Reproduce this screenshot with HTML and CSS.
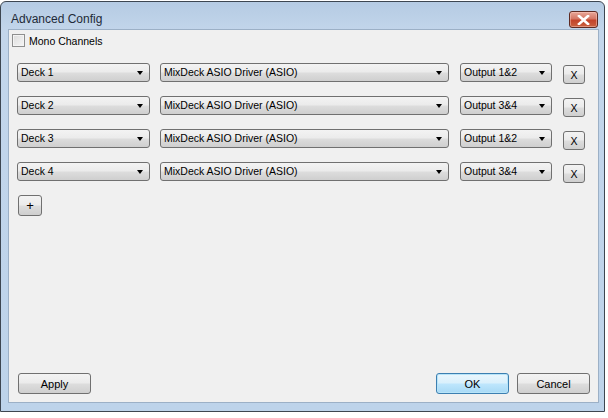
FILE: index.html
```html
<!DOCTYPE html>
<html>
<head>
<meta charset="utf-8">
<link rel="stylesheet" href="styles.css">
</head>
<body>
<div class="window">
  <div class="titlebar">
    <span class="title">Advanced Config</span>
    <div class="close"><svg width="13" height="10" viewBox="0 0 13 10"><path d="M2 1 L11 9 M11 1 L2 9" stroke="#fff" stroke-width="2.6" stroke-linecap="square"/></svg></div>
  </div>
  <div class="client">
    <label class="check"><span class="box"></span><span>Mono Channels</span></label>
    <div class="rows">
      <div class="row">
        <div class="combo deck">Deck 1<span class="arrow"></span></div>
        <div class="combo driver">MixDeck ASIO Driver (ASIO)<span class="arrow"></span></div>
        <div class="combo output">Output 1&amp;2<span class="arrow"></span></div>
        <div class="btn xbtn">X</div>
      </div>
      <div class="row">
        <div class="combo deck">Deck 2<span class="arrow"></span></div>
        <div class="combo driver">MixDeck ASIO Driver (ASIO)<span class="arrow"></span></div>
        <div class="combo output">Output 3&amp;4<span class="arrow"></span></div>
        <div class="btn xbtn">X</div>
      </div>
      <div class="row">
        <div class="combo deck">Deck 3<span class="arrow"></span></div>
        <div class="combo driver">MixDeck ASIO Driver (ASIO)<span class="arrow"></span></div>
        <div class="combo output">Output 1&amp;2<span class="arrow"></span></div>
        <div class="btn xbtn">X</div>
      </div>
      <div class="row">
        <div class="combo deck">Deck 4<span class="arrow"></span></div>
        <div class="combo driver">MixDeck ASIO Driver (ASIO)<span class="arrow"></span></div>
        <div class="combo output">Output 3&amp;4<span class="arrow"></span></div>
        <div class="btn xbtn">X</div>
      </div>
      <div class="btn plus">+</div>
    </div>
    <div class="spacer"></div>
    <div class="footer">
      <div class="btn wide">Apply</div>
      <div class="right">
        <div class="btn wide ok">OK</div>
        <div class="btn wide">Cancel</div>
      </div>
    </div>
  </div>
</div>
</body>
</html>
```
FILE: styles.css
```css
html, body {
  margin: 0;
  padding: 0;
  background: #ffffff;
}
body {
  width: 608px;
  height: 418px;
  overflow: hidden;
  font-family: "Liberation Sans", Arial, sans-serif;
  font-size: 10.5px;
  color: #000;
}
.window {
  margin-top: 1px;
  border: 1px solid #3d4651;
  border-radius: 6px 6px 0 0;
  background: linear-gradient(#b5cbe3 0px, #c3d6eb 30px, #bdd3ea 100%);
  display: flex;
  flex-direction: column;
  padding: 0 5px 8px 7px;
  box-sizing: border-box;
  width: 605px;
  height: 411px;
}
.titlebar {
  height: 27px;
  flex: none;
  display: flex;
  align-items: center;
  justify-content: space-between;
}
.title {
  font-size: 12px;
  color: #1e2a38;
  margin-left: 3px;
  margin-top: 7px;
}
.close {
  width: 27px;
  height: 15px;
  margin-right: 1px;
  margin-top: 8px;
  border: 1px solid #5e2a22;
  border-radius: 3px;
  background: linear-gradient(#e8a799 0%, #d57765 45%, #c3432a 55%, #c9603f 100%);
  display: flex;
  align-items: center;
  justify-content: center;
  box-shadow: inset 0 0 0 1px rgba(255,210,200,0.45);
}
.client {
  flex: 1;
  background: #f0f0f0;
  border: 1px solid #9cb0c6;
  display: flex;
  flex-direction: column;
  padding: 4px 0 8px 0;
}
.check {
  display: flex;
  align-items: center;
  gap: 4px;
  margin-left: 3px;
  height: 13px;
}
.box {
  width: 11px;
  height: 11px;
  border: 1px solid #8e8f8f;
  background: linear-gradient(135deg, #dcdcdc, #f6f6f6);
  box-shadow: inset 0 0 0 1px #f4f4f4;
}
.rows {
  display: flex;
  flex-direction: column;
  gap: 12px;
  margin-top: 16px;
  margin-left: 8px;
}
.row {
  display: flex;
  align-items: flex-start;
}
.combo {
  position: relative;
  height: 19px;
  box-sizing: border-box;
  border: 1px solid #707070;
  border-radius: 3px;
  background: linear-gradient(#f3f3f3 0%, #ebebeb 48%, #dddddd 52%, #cfcfcf 100%);
  padding-left: 3px;
  line-height: 17px;
}
.arrow {
  position: absolute;
  right: 6px;
  top: 7px;
  width: 0;
  height: 0;
  border-left: 3.5px solid transparent;
  border-right: 3.5px solid transparent;
  border-top: 4px solid #000;
}
.deck { width: 133px; }
.driver { width: 289px; margin-left: 10px; }
.output { width: 92px; margin-left: 11px; }
.btn {
  box-sizing: border-box;
  border: 1px solid #707070;
  border-radius: 3px;
  background: linear-gradient(#f3f3f3 0%, #ebebeb 48%, #dddddd 52%, #cfcfcf 100%);
  display: flex;
  align-items: center;
  justify-content: center;
}
.xbtn {
  width: 22px;
  height: 19px;
  margin-left: 11px;
  margin-top: 2px;
}
.plus {
  width: 24px;
  height: 21px;
  margin-left: 1px;
  font-size: 13px;
}
.spacer { flex: 1; }
.footer {
  display: flex;
  justify-content: space-between;
  padding: 0 8px 0 9px;
}
.right {
  display: flex;
  gap: 8px;
}
.wide {
  width: 73px;
  height: 21px;
  font-size: 11px;
}
.ok {
  border-color: #3c7fb1;
  background: linear-gradient(#eaf6fd 0%, #d9f0fc 48%, #bee6fd 52%, #a7d9f5 100%);
  box-shadow: inset 0 0 0 1px #b8e4f8;
}
```
